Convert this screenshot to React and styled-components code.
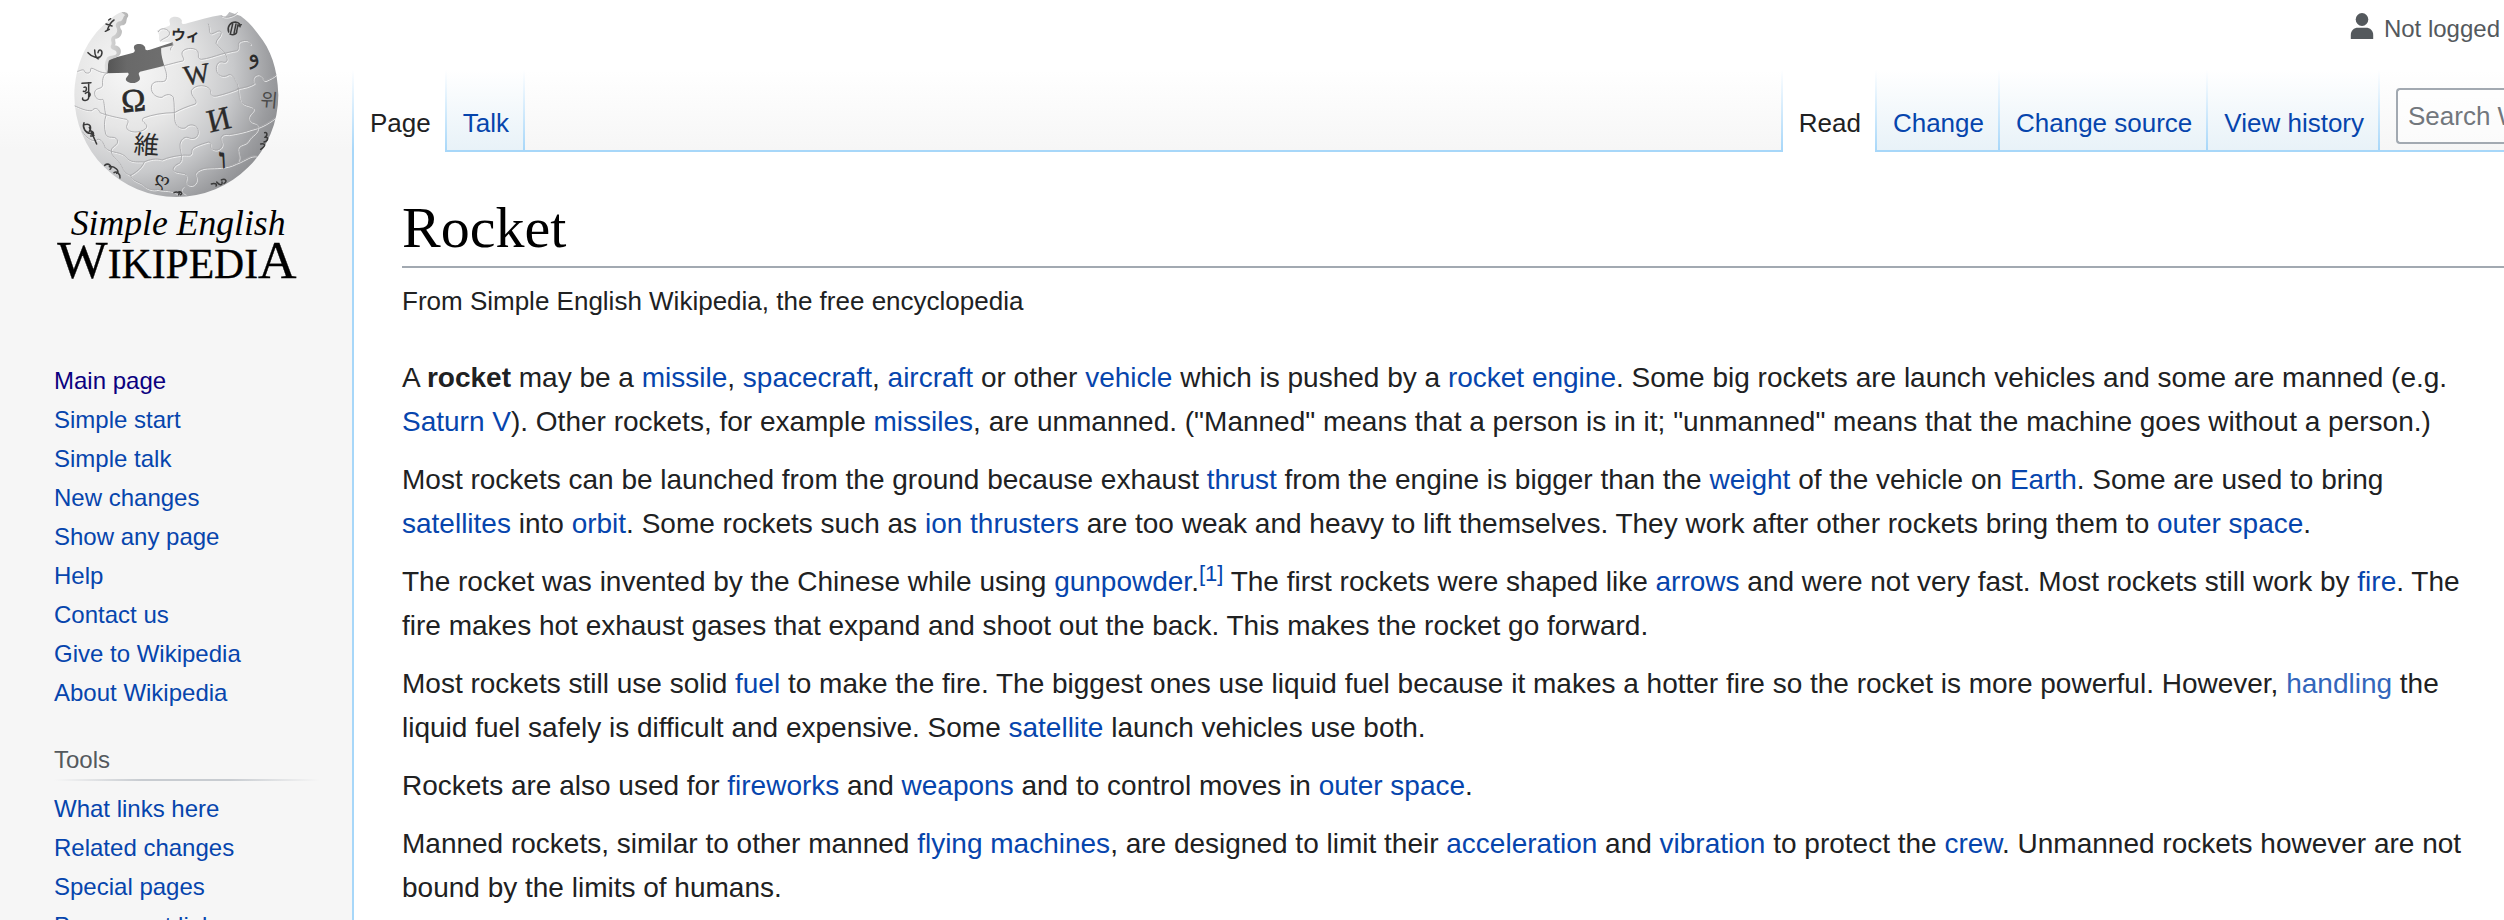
import React from "react";
import styled, { createGlobalStyle } from "styled-components";

const sans = `"Liberation Sans", Arial, sans-serif`;
const serif = `"Liberation Serif", "Times New Roman", serif`;
const line = "#a7d7f9";
const fade = `linear-gradient(to bottom, #ffffff, ${line})`;

const GlobalStyle = createGlobalStyle`
  *, *::before, *::after { box-sizing: border-box; }
  html { height: 100%; }
  body {
    height: 100%;
    margin: 0;
    overflow: hidden;
    background: #f6f6f6;
    color: #202122;
    font-family: ${sans};
  }
  #root { height: 100%; }
`;

const Page = styled.div`
  display: grid;
  grid-template-columns: 352px minmax(0, 1fr);
  height: 100%;
  overflow: hidden;
  background: linear-gradient(to bottom, #ffffff 70px, #f6f6f6 150px);
`;

const Link = styled.a`
  color: ${(p) => (p.$tone === "visited" ? "#0b0080" : p.$tone === "external" ? "#3366bb" : "#0645ad")};
  text-decoration: none;
`;

const Sidebar = styled.aside`
  display: flex;
  flex-direction: column;
  padding: 0 32px 0 40px;
  overflow: hidden;
`;

const LogoLink = styled.a`
  display: block;
  height: 361px;
  flex-shrink: 0;
`;

const LogoArt = styled.svg`
  display: block;
  width: 280px;
  height: 290px;
`;

const Portal = styled.nav`
  flex-shrink: 0;
  padding-left: 14px;
  margin-bottom: 30px;
`;

const PortalTitle = styled.h3`
  margin: 0 0 8px;
  padding-bottom: 3px;
  font-size: 24px;
  line-height: 36px;
  font-weight: 400;
  color: #54595d;
  background: linear-gradient(to right, transparent, #c8ccd1 33%, #c8ccd1 66%, transparent) left bottom / 100% 2px no-repeat;
`;

const PortalList = styled.ul`
  list-style: none;
  margin: 0;
  padding: 0;
  font-size: 24px;
  line-height: 39px;
`;

const Main = styled.div`
  display: flex;
  flex-direction: column;
  min-width: 0;
`;

const Header = styled.header`
  position: relative;
  z-index: 1;
  height: 150px;
  flex-shrink: 0;
`;

const Personal = styled.div`
  display: flex;
  justify-content: flex-end;
  align-items: flex-start;
  gap: 10px;
  height: 70px;
  padding: 13px 4px 0 0;
  font-size: 24px;
  line-height: 32px;
  color: #54595d;
`;

const UserIcon = styled.svg`
  width: 24px;
  height: 27px;
`;

const TabBar = styled.div`
  display: flex;
  height: 80px;
`;

const TabGroup = styled.nav`
  display: flex;
  height: 80px;
  padding-left: 2px;
  background: ${fade} left top / 2px 100% no-repeat;
  ${(p) => p.$end && "margin-left: auto;"}
`;

const Tab = styled.a`
  height: ${(p) => (p.$selected ? 82 : 80)}px;
  padding: 38px 16px 0;
  font-size: 26px;
  line-height: 30px;
  white-space: nowrap;
  text-decoration: none;
  color: ${(p) => (p.$selected ? "#202122" : "#0645ad")};
  background:
    ${fade} right top / 2px 100% no-repeat,
    ${(p) => (p.$selected ? "linear-gradient(#ffffff, #ffffff)" : "linear-gradient(to bottom, #ffffff, #e8f2f8)")};
`;

const SearchForm = styled.form`
  display: flex;
  width: 124px;
  padding: 18px 0 6px 16px;
`;

const SearchInput = styled.input`
  width: 100%;
  padding: 0 0 0 10px;
  appearance: none;
  border: 2px solid #a2a9b1;
  border-right: 0;
  border-radius: 4px 0 0 4px;
  background: rgba(255, 255, 255, 0.5);
  font-family: ${sans};
  font-size: 26px;
  color: #202122;
  outline: 0;
  &::placeholder { color: #72777d; opacity: 1; }
  &::-webkit-search-cancel-button { display: none; }
`;

const Content = styled.main`
  flex: 1;
  padding: 40px 0 0 48px;
  border: solid ${line};
  border-width: 2px 0 0 2px;
  background: #ffffff;
`;

const Title = styled.h1`
  margin: 0;
  padding-bottom: 2px;
  border-bottom: 2px solid #a2a9b1;
  font-family: ${serif};
  font-size: 58px;
  line-height: 72px;
  font-weight: 400;
  color: #000000;
`;

const Tagline = styled.div`
  padding-top: 14px;
  font-size: 26px;
  line-height: 38px;
`;

const Article = styled.article`
  padding: 36px 24px 0 0;
  font-size: 28px;
  line-height: 44px;
`;

const Paragraph = styled.p`
  margin: 0 0 14px;
`;

const Reference = styled.sup`
  font-size: 22px;
  line-height: 1;
`;

const A = ({ children, tone }) => (
  <Link href="#" $tone={tone}>{children}</Link>
);

const seams = [
  "M113 214 C122 212 128 206 133 212 C134 222 152 222 152 210 C150 200 160 206 172 212 C182 217 192 219 201 219",
  "M372 197 C392 192 412 186 428 183 C438 178 420 166 428 154 C436 142 470 142 474 156 C478 168 470 176 484 178 C505 176 524 168 545 162 C562 158 576 154 590 152 C602 146 588 130 602 124 C618 118 632 122 632 134",
  "M203 219 C192 220 186 234 188 256 C186 268 168 262 164 276 C162 296 178 302 188 298 C194 304 192 326 198 346 C192 362 192 384 197 402 C204 420 224 404 232 420 C238 438 210 438 214 456 C218 474 238 482 248 504 C254 518 262 524 272 526",
  "M372 197 C378 214 384 230 376 242 C364 250 346 238 336 254 C328 274 344 294 366 292 C378 282 392 280 400 292 C404 310 402 334 404 358 C406 378 418 388 436 384 C446 370 468 372 474 388 C480 408 464 420 448 414 C438 408 424 414 420 432 C418 450 428 462 424 478",
  "M105 318 C118 324 140 334 156 332 C164 320 176 326 180 338 C200 346 236 354 260 358 C272 368 254 374 262 388 C276 402 312 396 320 382 C322 368 300 366 310 354 C336 344 370 338 403 338 C424 326 446 318 466 312 C476 300 452 292 454 272 C464 252 504 252 512 272 C512 286 514 290 530 288 C556 282 578 274 598 266",
  "M505 72 C512 86 504 98 514 102 C528 98 540 86 544 98 C544 112 528 116 528 130 C536 144 552 150 558 166 C566 180 560 190 548 186 C534 182 526 198 530 214 C536 232 556 232 566 224 C580 222 584 240 592 252 C600 268 594 290 602 304 C612 318 634 316 640 324 C646 334 626 340 626 354 C630 372 650 364 654 378 C656 400 634 404 626 420 C618 436 596 430 594 446 C594 462 602 468 596 482",
  "M128 396 C138 412 154 424 168 422 C176 410 190 424 196 444 C214 462 246 452 262 476 C276 490 298 484 312 486 C328 478 350 474 366 480 C384 472 406 468 424 466 C444 462 456 474 456 450 C456 442 482 432 506 426 C520 428 506 442 518 448 C536 456 552 440 546 426 C538 412 546 400 566 404 C590 400 612 396 634 388 C660 382 680 372 704 354",
  "M592 266 C612 264 632 258 644 250 C634 238 642 224 656 224 C670 226 664 240 676 242 C690 236 702 230 708 224",
  "M424 478 C424 494 408 488 400 504 C396 520 420 516 436 522 C446 538 430 546 444 554 C462 564 476 542 468 528 C462 516 480 506 500 504 C528 502 556 506 588 490 C620 478 630 464 650 468",
  "M272 526 C290 516 306 502 312 488 M272 526 C274 544 300 546 310 556 C322 568 340 572 352 568 C374 574 392 568 410 580 M430 560 C420 568 426 578 436 582",
  "M355 95 C360 82 380 84 388 96 C392 112 372 112 362 122 M398 130 C404 142 388 138 392 150 M545 48 C560 58 584 46 592 38",
];

const smallMarks = [
  "M126 250 L153 248 M132 262 C142 256 142 278 130 274 M128 294 C124 304 146 304 146 292 L146 248 M136 280 C146 272 156 282 146 292",
  "M132 368 C126 384 138 400 150 400 M134 374 C150 368 156 382 148 394 M138 394 L162 406 M148 382 L170 432 M156 394 C164 398 160 410 152 408",
  "M194 496 C206 486 220 502 210 508 M208 500 C224 496 242 516 230 520 M222 518 C230 512 242 522 240 534",
  "M144 158 C156 172 178 178 184 166 C190 152 178 142 174 158 M164 150 C164 168 172 178 176 176",
  "M196 94 L208 88 M202 90 C206 78 212 66 222 60 M198 72 L216 78 M206 60 L212 56",
  "M674 398 C682 396 684 408 674 412 C688 410 684 424 672 426 M662 432 C676 430 680 436 662 448",
  "M514 552 C522 548 534 552 528 558 M530 546 C540 558 548 556 546 546 M544 540 C556 534 564 544 552 550",
  "M402 578 C410 574 422 578 416 584 M416 576 C424 574 428 582 422 584",
  "M566 96 C560 80 572 66 586 66 C598 68 602 74 600 80 M570 102 C582 108 592 100 590 92 M572 98 L578 72 M582 100 L588 72 M590 94 L594 74 M594 78 L604 74",
];

const Logo = () => (
  <LogoArt viewBox="0 0 840 870" role="img" aria-label="Simple English Wikipedia">
    <defs>
      <radialGradient id="ball" gradientUnits="userSpaceOnUse" cx="270" cy="210" r="500">
        <stop offset="0" stopColor="#f7f7f7" />
        <stop offset="0.35" stopColor="#e6e6e6" />
        <stop offset="0.62" stopColor="#c8c9cb" />
        <stop offset="0.85" stopColor="#9b9c9f" />
        <stop offset="1" stopColor="#858689" />
      </radialGradient>
      <linearGradient id="inner" x1="0" y1="0" x2="1" y2="0">
        <stop offset="0" stopColor="#555555" />
        <stop offset="0.3" stopColor="#696969" />
        <stop offset="1" stopColor="#707070" />
      </linearGradient>
      <linearGradient id="rim" x1="0" y1="0" x2="1" y2="0">
        <stop offset="0" stopColor="#dedede" />
        <stop offset="1" stopColor="#b4b4b4" />
      </linearGradient>
    </defs>
    <path
      fill="url(#ball)"
      d="M103 285 C105 200 136 126 190 76 C208 60 226 42 244 37 C256 38 264 44 260 50 C252 56 252 66 240 66 C230 66 226 76 234 82 C240 96 226 110 216 112 C212 120 222 126 216 134 C208 142 222 142 232 146 C240 154 236 166 228 170 C216 176 206 170 202 180 C196 194 206 206 201 220
      C220 220 246 218 262 218 C272 224 254 232 260 240 C268 252 292 250 300 240 C302 230 290 222 300 214 C324 208 350 202 372 196 C368 178 362 158 366 142 L398 132 C384 120 364 132 358 122 C354 110 362 104 350 92
      L386 78 C396 74 384 64 390 56 C400 46 422 50 426 62 C422 74 432 74 444 69 C478 60 510 50 544 45 C552 56 556 52 568 36 L602 48 C622 62 640 82 656 104 C692 148 713 204 715 285 A306 306 0 0 1 103 285 Z"
    />
    <path
      fill="url(#inner)"
      d="M206 178 L280 158 C292 152 276 146 284 136 C294 128 314 132 316 144 C314 150 320 152 330 149 L398 127 L400 136 L364 144 C362 160 368 180 373 197 C350 203 324 209 300 215 C290 222 304 230 299 240 C290 252 268 252 259 242 C252 232 272 226 264 218 L201 220 Z"
    />
    <path
      fill="url(#rim)"
      d="M244 37 C258 34 268 42 264 50 C256 58 264 70 250 76 C236 74 240 84 246 92 C246 108 236 116 226 116 C224 124 230 130 224 136 C236 136 246 148 242 160 C238 174 214 176 206 182 C202 188 206 202 201 220 C190 206 194 184 202 172 C212 164 226 170 230 160 C230 146 210 152 212 138 C220 128 208 120 216 110 C230 104 234 94 230 84 C222 72 234 62 242 64 C252 58 248 48 256 46 Z"
    />
    <g fill="none" strokeLinecap="round" strokeLinejoin="round">
      <g stroke="#ffffff" strokeWidth="3" opacity="0.7" transform="translate(2 3)">
        {seams.map((d) => <path key={d} d={d} />)}
      </g>
      <g stroke="#a6a6a8" strokeWidth="2.5">
        {seams.map((d) => <path key={d} d={d} />)}
      </g>
      <g stroke="#3a3a3a" strokeWidth="4.5">
        {smallMarks.map((d) => <path key={d} d={d} />)}
      </g>
    </g>
    <g fill="#2b2b2b" fontFamily="Liberation Serif, serif" textAnchor="middle">
      <text transform="translate(283 334) rotate(-5)" fontSize="98" stroke="#2b2b2b" strokeWidth="2">Ω</text>
      <text transform="translate(474 250) rotate(-9)" fontSize="84" stroke="#2b2b2b" strokeWidth="1">W</text>
      <text transform="translate(544 390) rotate(-13)" fontSize="98" stroke="#2b2b2b" strokeWidth="1">И</text>
      <text transform="translate(318 462) rotate(4)" fontSize="76" fontFamily="Noto Sans CJK JP, sans-serif">維</text>
      <text transform="translate(436 122) rotate(3)" fontSize="44" fontWeight="700" fontFamily="Noto Sans CJK JP, sans-serif">ウィ</text>
      <text transform="translate(686 320) rotate(5)" fontSize="56" fill="#4a4a4a" fontFamily="Noto Sans CJK KR, sans-serif">위</text>
      <text transform="translate(550 506) rotate(-3)" fontSize="88" fontWeight="700">ו</text>
      <text transform="translate(644 186) rotate(-18)" fontSize="72" fontFamily="DejaVu Sans, sans-serif">و</text>
      <text transform="translate(362 556) rotate(18)" fontSize="54" fontFamily="DejaVu Serif, serif">ღ</text>
    </g>
    <g fill="#000000" fontFamily="Liberation Serif, serif">
      <text x="92" y="706" fontSize="107" fontStyle="italic">Simple English</text>
      <text x="52" y="833" fontSize="125" stroke="#000000" strokeWidth="1">
        <tspan fontSize="160">W</tspan>IKIPEDI<tspan fontSize="160">A</tspan>
      </text>
    </g>
  </LogoArt>
);

const navigation = ["Main page", "Simple start", "Simple talk", "New changes", "Show any page", "Help", "Contact us", "Give to Wikipedia", "About Wikipedia"];
const tools = ["What links here", "Related changes", "Special pages", "Permanent link"];

export default function App() {
  return (
    <>
      <GlobalStyle />
      <Page>
        <Sidebar>
          <LogoLink href="#" aria-label="Main page"><Logo /></LogoLink>
          <Portal aria-label="Navigation">
            <PortalList>
              {navigation.map((item, i) => (
                <li key={item}><A tone={i === 0 ? "visited" : undefined}>{item}</A></li>
              ))}
            </PortalList>
          </Portal>
          <Portal aria-label="Tools">
            <PortalTitle>Tools</PortalTitle>
            <PortalList>
              {tools.map((item) => <li key={item}><A>{item}</A></li>)}
            </PortalList>
          </Portal>
        </Sidebar>
        <Main>
          <Header>
            <Personal>
              <UserIcon viewBox="0 0 24 27" aria-hidden="true">
                <ellipse cx="12" cy="6.5" rx="6.3" ry="6.5" fill="#54595d" />
                <path d="M0.8 26 V22 C0.8 17.5 4 14.8 8 14.8 H16 C20 14.8 23.2 17.5 23.2 22 V26 Z" fill="#54595d" />
              </UserIcon>
              <span>Not logged</span>
            </Personal>
            <TabBar>
              <TabGroup aria-label="Namespaces">
                <Tab href="#" $selected>Page</Tab>
                <Tab href="#">Talk</Tab>
              </TabGroup>
              <TabGroup aria-label="Views" $end>
                <Tab href="#" $selected>Read</Tab>
                <Tab href="#">Change</Tab>
                <Tab href="#">Change source</Tab>
                <Tab href="#">View history</Tab>
              </TabGroup>
              <SearchForm role="search">
                <SearchInput type="search" aria-label="Search Wikipedia" placeholder="Search Wikipedia" />
              </SearchForm>
            </TabBar>
          </Header>
          <Content>
            <Title>Rocket</Title>
            <Tagline>From Simple English Wikipedia, the free encyclopedia</Tagline>
            <Article>
              <Paragraph>
                A <b>rocket</b> may be a <A>missile</A>, <A>spacecraft</A>, <A>aircraft</A> or other <A>vehicle</A> which is pushed by a <A>rocket engine</A>. Some big rockets are launch vehicles and some are manned (e.g. <A>Saturn V</A>). Other rockets, for example <A>missiles</A>, are unmanned. ("Manned" means that a person is in it; "unmanned" means that the machine goes without a person.)
              </Paragraph>
              <Paragraph>
                Most rockets can be launched from the ground because exhaust <A>thrust</A> from the engine is bigger than the <A>weight</A> of the vehicle on <A>Earth</A>. Some are used to bring <A>satellites</A> into <A>orbit</A>. Some rockets such as <A>ion thrusters</A> are too weak and heavy to lift themselves. They work after other rockets bring them to <A>outer space</A>.
              </Paragraph>
              <Paragraph>
                The rocket was invented by the Chinese while using <A>gunpowder</A>.<Reference><A>[1]</A></Reference> The first rockets were shaped like <A>arrows</A> and were not very fast. Most rockets still work by <A>fire</A>. The fire makes hot exhaust gases that expand and shoot out the back. This makes the rocket go forward.
              </Paragraph>
              <Paragraph>
                Most rockets still use solid <A>fuel</A> to make the fire. The biggest ones use liquid fuel because it makes a hotter fire so the rocket is more powerful. However, <A tone="external">handling</A> the liquid fuel safely is difficult and expensive. Some <A>satellite</A> launch vehicles use both.
              </Paragraph>
              <Paragraph>
                Rockets are also used for <A>fireworks</A> and <A>weapons</A> and to control moves in <A>outer space</A>.
              </Paragraph>
              <Paragraph>
                Manned rockets, similar to other manned <A>flying machines</A>, are designed to limit their <A>acceleration</A> and <A>vibration</A> to protect the <A>crew</A>. Unmanned rockets however are not bound by the limits of humans.
              </Paragraph>
            </Article>
          </Content>
        </Main>
      </Page>
    </>
  );
}
